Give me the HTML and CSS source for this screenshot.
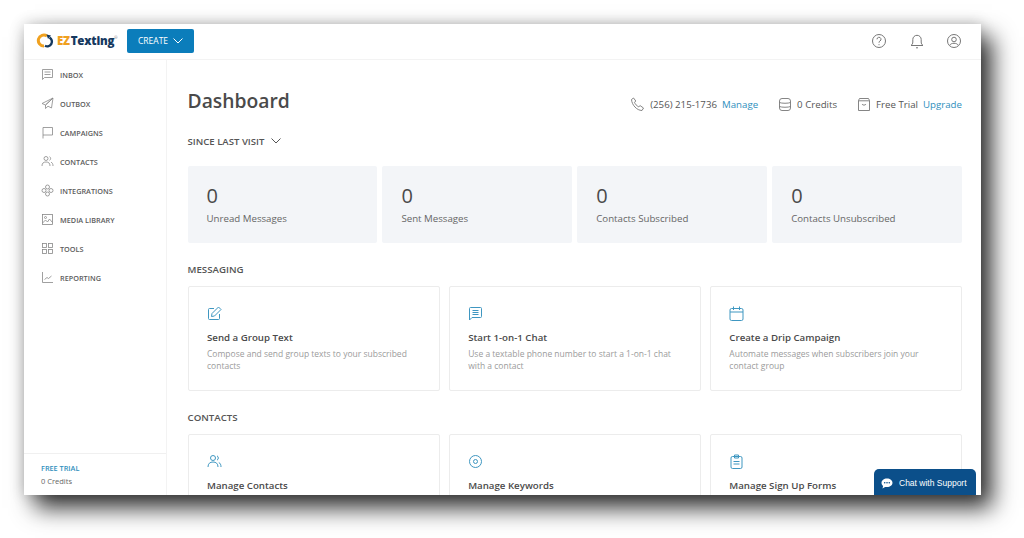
FILE: index.html
```html
<!DOCTYPE html>
<html lang="en">
<head>
    <meta charset="UTF-8">
    <meta name="viewport" content="width=device-width, initial-scale=1.0">
    <title>Dashboard</title>
    <link rel="stylesheet" href="styles.css">
</head>
<body>
    <div class="window">
        <header class="topbar">
            <div class="logo">
                <svg class="logo-mark" width="21" height="16" viewBox="0 0 21 16" fill="none">
                    <path d="M8 13a5.500 5.500 0 1 1 3-10" stroke="#f0a11f" stroke-width="3"/>
                    <path d="M9 12.800a4.600 4.600 0 1 0 4.500-8.200" stroke="#15395f" stroke-width="2.400"/>
                    <path d="M10.500 1.500l4.500 1-3 3.500z" fill="#15395f"/>
                </svg>
                <span class="logo-ez">EZ</span><span class="logo-texting">Texting</span><span class="logo-reg">®</span>
            </div>
            <button class="create-btn">CREATE
                <svg width="10" height="6" viewBox="0 0 10 6" fill="none" stroke="#fff" stroke-width="1"><path d="M.5.5 5 5l4.500-4.500"/></svg>
            </button>
            <div class="top-icons">
                <svg width="16" height="16" viewBox="0 0 16 16" fill="none" stroke="#777" stroke-width="1"><circle cx="8" cy="8" r="6.500"/><path d="M6 6.300a2 2 0 1 1 3 1.700c-.7.4-1 .8-1 1.700"/><path d="M8 11.200v1"/></svg>
                <svg width="16" height="16" viewBox="0 0 16 16" fill="none" stroke="#777" stroke-width="1"><path d="M2 12.500h12c-1.300-1-1.800-2-1.800-3.500V6.500a4.200 4.200 0 0 0-8.400 0V9c0 1.500-.5 2.500-1.800 3.500z"/><path d="M7 14.800h2"/></svg>
                <svg width="16" height="16" viewBox="0 0 16 16" fill="none" stroke="#777" stroke-width="1"><circle cx="8" cy="8" r="6.500"/><circle cx="8" cy="6.500" r="2.300"/><path d="M3.800 12.300c.8-1.500 2.200-2 4.200-2s3.400.5 4.200 2"/></svg>
            </div>
        </header>
        <div class="body-row">
            <nav class="sidebar">
                <ul class="nav-list">
                    <li class="nav-item">
                        <svg width="13" height="13" viewBox="0 0 13 13" fill="none" stroke="#888" stroke-width=".8"><path d="M1.500 1.500h10v8h-8l-2 2z"/><path d="M3.500 4h6M3.500 6.500h6"/></svg>
                        Inbox
                    </li>
                    <li class="nav-item">
                        <svg width="13" height="13" viewBox="0 0 13 13" fill="none" stroke="#888" stroke-width=".8"><path d="M12 1 1 6.500l3.500 1.500zM12 1 4.500 8v3.500L7 9.200M12 1l-1.500 10L7 9.200"/></svg>
                        Outbox
                    </li>
                    <li class="nav-item">
                        <svg width="13" height="13" viewBox="0 0 13 13" fill="none" stroke="#888" stroke-width=".8"><path d="M2 12.500V1.500h9.500v7.500H2"/></svg>
                        Campaigns
                    </li>
                    <li class="nav-item">
                        <svg width="13" height="13" viewBox="0 0 13 13" fill="none" stroke="#888" stroke-width=".8"><circle cx="5" cy="3.500" r="2"/><path d="M1 11c0-3 1.500-4 4-4s4 1 4 4M8.500 1.700a2 2 0 0 1 0 3.600M10 7.200c1.400.5 2 1.800 2 3.800"/></svg>
                        Contacts
                    </li>
                    <li class="nav-item">
                        <svg width="13" height="13" viewBox="0 0 13 13" fill="none" stroke="#888" stroke-width=".8"><circle cx="6.500" cy="3" r="2"/><circle cx="6.500" cy="10" r="2"/><circle cx="3" cy="6.500" r="2"/><circle cx="10" cy="6.500" r="2"/></svg>
                        Integrations
                    </li>
                    <li class="nav-item">
                        <svg width="13" height="13" viewBox="0 0 13 13" fill="none" stroke="#888" stroke-width=".8"><rect x="1.500" y="1.500" width="10" height="10"/><circle cx="4.500" cy="4.500" r="1"/><path d="m1.500 10 3-3 2 2 2-3 3 3.500"/></svg>
                        Media Library
                    </li>
                    <li class="nav-item">
                        <svg width="13" height="13" viewBox="0 0 13 13" fill="none" stroke="#888" stroke-width=".8"><rect x="1.500" y="1.500" width="4" height="4"/><rect x="7.500" y="1.500" width="4" height="4"/><rect x="1.500" y="7.500" width="4" height="4"/><rect x="7.500" y="7.500" width="4" height="4"/></svg>
                        Tools
                    </li>
                    <li class="nav-item">
                        <svg width="13" height="13" viewBox="0 0 13 13" fill="none" stroke="#888" stroke-width=".8"><path d="M1.500 1v10.500H12"/><path d="m3.500 8.500 2.500-2 1.500 1 3-2.500"/></svg>
                        Reporting
                    </li>
                </ul>
                <div class="plan">
                    <div class="plan-name">FREE TRIAL</div>
                    <div class="plan-credits">0 Credits</div>
                </div>
            </nav>
            <main class="content">
                <div class="title-row">
                    <h1>Dashboard</h1>
                    <div class="account">
                        <span class="account-item">
                            <svg width="15" height="15" viewBox="0 0 15 15" fill="none" stroke="#777" stroke-width=".9"><path d="M1.500 2.500 3.500 1l2.300 3-1.300 1.300c.5 1.700 2.300 3.700 4.300 4.500l1.300-1.200 3.400 2.400-1.500 2.500C7 13.500 1.800 8 1.500 2.500z"/></svg>
                            (256) 215-1736 <a class="link">Manage</a>
                        </span>
                        <span class="account-item">
                            <svg width="14" height="15" viewBox="0 0 14 15" fill="none" stroke="#777" stroke-width=".9"><rect x="1.500" y="1.500" width="11" height="12" rx="2.500"/><path d="M1.500 5.500c2 1 9 1 11 0M1.500 9.500c2 1 9 1 11 0"/></svg>
                            0 Credits
                        </span>
                        <span class="account-item">
                            <svg width="14" height="15" viewBox="0 0 14 15" fill="none" stroke="#777" stroke-width=".9"><path d="M2.500 1.500h9l1 2v10h-11v-10zM1.500 3.800h11"/><path d="M5 7c.5 1.500 3.500 1.500 4 0"/></svg>
                            Free Trial <a class="link">Upgrade</a>
                        </span>
                    </div>
                </div>
                <div class="since">SINCE LAST VISIT
                    <svg width="10" height="6" viewBox="0 0 10 6" fill="none" stroke="#555" stroke-width="1"><path d="M.5.5 5 5l4.500-4.500"/></svg>
                </div>
                <div class="stats">
                    <div class="stat"><div class="stat-num">0</div><div class="stat-label">Unread Messages</div></div>
                    <div class="stat"><div class="stat-num">0</div><div class="stat-label">Sent Messages</div></div>
                    <div class="stat"><div class="stat-num">0</div><div class="stat-label">Contacts Subscribed</div></div>
                    <div class="stat"><div class="stat-num">0</div><div class="stat-label">Contacts Unsubscribed</div></div>
                </div>
                <h2 class="section">MESSAGING</h2>
                <div class="cards">
                    <div class="card">
                        <svg class="card-icon" width="15" height="15" viewBox="0 0 15 15" fill="none" stroke="#3f97c1" stroke-width="1"><path d="M7 2.500H2.500a1 1 0 0 0-1 1v9a1 1 0 0 0 1 1h9a1 1 0 0 0 1-1V8"/><path d="M11.500 1 14 3.500 7.500 10l-3 .5.500-3z"/></svg>
                        <h3>Send a Group Text</h3>
                        <p>Compose and send group texts to your subscribed contacts</p>
                    </div>
                    <div class="card">
                        <svg class="card-icon" width="15" height="15" viewBox="0 0 15 15" fill="none" stroke="#3f97c1" stroke-width="1"><path d="M2.500 1.500h10a1 1 0 0 1 1 1v8a1 1 0 0 1-1 1H4l-2.500 2.500v-11.500a1 1 0 0 1 1-1z"/><path d="M4.500 4.500h6M4.500 6.500h6M4.500 8.500h6"/></svg>
                        <h3>Start 1-on-1 Chat</h3>
                        <p>Use a textable phone number to start a 1-on-1 chat with a contact</p>
                    </div>
                    <div class="card">
                        <svg class="card-icon" width="15" height="15" viewBox="0 0 15 15" fill="none" stroke="#3f97c1" stroke-width="1"><rect x="1" y="2.500" width="13" height="12" rx="1.500"/><path d="M1 6h13M4.500.5v3.500M10.500.5v3.500"/></svg>
                        <h3>Create a Drip Campaign</h3>
                        <p>Automate messages when subscribers join your contact group</p>
                    </div>
                </div>
                <h2 class="section">CONTACTS</h2>
                <div class="cards">
                    <div class="card">
                        <svg class="card-icon" width="15" height="15" viewBox="0 0 15 15" fill="none" stroke="#3f97c1" stroke-width="1"><circle cx="6" cy="4" r="2.500"/><path d="M1 13c0-3.500 2-5 5-5s5 1.500 5 5M10 1.800a2.500 2.500 0 0 1 0 4.400M11.800 8.500c1.500.7 2.200 2.300 2.200 4.500"/></svg>
                        <h3>Manage Contacts</h3>
                    </div>
                    <div class="card">
                        <svg class="card-icon" width="15" height="15" viewBox="0 0 15 15" fill="none" stroke="#3f97c1" stroke-width="1"><circle cx="7.500" cy="7.500" r="6"/><circle cx="7.500" cy="7.500" r="2"/></svg>
                        <h3>Manage Keywords</h3>
                    </div>
                    <div class="card">
                        <svg class="card-icon" width="15" height="15" viewBox="0 0 15 15" fill="none" stroke="#3f97c1" stroke-width="1"><rect x="2" y="2.500" width="11" height="12" rx="1.500"/><path d="M5.500 1h4v3h-4zM4.500 7.500h6M4.500 10h6"/></svg>
                        <h3>Manage Sign Up Forms</h3>
                    </div>
                </div>
            </main>
        </div>
        <div class="chat-btn">
            <svg width="12" height="11" viewBox="0 0 12 11"><path d="M6 .5c3.100 0 5.500 1.900 5.500 4.300S9.100 9.100 6 9.100c-.7 0-1.300-.1-1.900-.2L1.500 10.500l.6-2.500C1 7.100.5 6 .5 4.800.5 2.400 2.900.5 6 .5z" fill="#fff"/><circle cx="3.700" cy="4.800" r=".8" fill="#0b4f8a"/><circle cx="6" cy="4.800" r=".8" fill="#0b4f8a"/><circle cx="8.300" cy="4.800" r=".8" fill="#0b4f8a"/></svg>
            Chat with Support
        </div>
    </div>
</body>
</html>
```

FILE: styles.css
```css
html, body {
    height: 100%;
}
body {
    background-color: #ffffff;
    color: #4a4a4a;
    font-family: "Open Sans", sans-serif;
    margin: 0;
    padding: 0;
    overflow: hidden;
}
.window {
    position: relative;
    display: flex;
    flex-direction: column;
    width: 957px;
    height: 471px;
    margin: 24px 0 0 24px;
    background-color: #ffffff;
    box-shadow: 11px 13px 22px rgba(0, 0, 0, 0.8), 0 0 14px rgba(0, 0, 0, 0.2);
}
.topbar {
    display: flex;
    align-items: center;
    flex: 0 0 36px;
    box-sizing: border-box;
    border-bottom: 1px solid #f3f3f3;
    padding: 0 19px 2px 12px;
}
.logo {
    display: flex;
    align-items: center;
    width: 91px;
}
.logo-ez {
    color: #f0a11f;
    font-size: 11.5px;
    font-weight: 800;
    letter-spacing: -0.3px;
}
.logo-texting {
    color: #15395f;
    font-size: 11.5px;
    font-weight: 800;
    letter-spacing: -0.2px;
    margin-left: 1px;
}
.logo-reg {
    color: #777777;
    font-size: 4px;
    align-self: flex-start;
    margin-top: 2px;
}
.create-btn {
    display: flex;
    align-items: center;
    gap: 5px;
    height: 24px;
    width: 67px;
    justify-content: center;
    background-color: #0b7dbb;
    color: #ffffff;
    border: 0;
    border-radius: 2px;
    font-family: "Open Sans", sans-serif;
    font-size: 8.5px;
    font-weight: 400;
    padding: 0;
}
.top-icons {
    display: flex;
    gap: 21.5px;
    margin-left: auto;
}
.body-row {
    display: flex;
    flex: 1;
    min-height: 0;
}
.sidebar {
    display: flex;
    flex-direction: column;
    flex: 0 0 143px;
    box-sizing: border-box;
    border-right: 1px solid #f3f3f3;
}
.nav-list {
    list-style: none;
    margin: 0;
    padding: 0;
    flex: 1;
}
.nav-item {
    display: flex;
    align-items: center;
    gap: 6px;
    height: 29px;
    padding-left: 17px;
    color: #5c5c5c;
    font-size: 7.3px;
    font-weight: 600;
    text-transform: uppercase;
}
.plan {
    height: 42px;
    box-sizing: border-box;
    border-top: 1px solid #f0f0f0;
    padding: 9px 0 0 17px;
}
.plan-name {
    color: #2f8fbd;
    font-size: 7.3px;
    font-weight: 600;
    line-height: 10px;
}
.plan-credits {
    color: #666666;
    font-size: 7.5px;
    line-height: 10px;
    margin-top: 3px;
}
.content {
    flex: 1;
    min-width: 0;
    box-sizing: border-box;
    padding: 0 19px 0 20.5px;
    overflow: hidden;
}
.title-row {
    display: flex;
    justify-content: space-between;
    align-items: center;
    margin-top: 25px;
    height: 30px;
}
h1 {
    margin: 0;
    color: #4a4a4a;
    font-size: 19.3px;
    font-weight: 600;
}
.account {
    display: flex;
    gap: 20px;
    font-size: 9.7px;
    color: #555555;
    padding-top: 8px;
}
.account-item {
    display: flex;
    align-items: center;
    gap: 4px;
}
.account-item svg {
    margin-right: 1px;
}
.link {
    color: #2f8fbd;
    margin-left: 1px;
}
.since {
    display: flex;
    align-items: center;
    gap: 7px;
    margin-top: 19px;
    height: 14px;
    font-size: 9.6px;
    font-weight: 600;
    color: #555555;
}
.stats {
    display: grid;
    grid-template-columns: repeat(4, 1fr);
    gap: 5px;
    margin-top: 18px;
}
.stat {
    height: 77px;
    box-sizing: border-box;
    background-color: #f3f5f8;
    border-radius: 2px;
    padding: 18px 0 0 19px;
}
.stat-num {
    font-size: 20px;
    line-height: 24px;
    font-weight: 500;
    color: #4a4a4a;
}
.stat-label {
    font-size: 9.7px;
    line-height: 14px;
    margin-top: 4px;
    color: #666666;
}
.section {
    margin: 20px 0 0 0;
    height: 14px;
    font-size: 9.7px;
    line-height: 14px;
    font-weight: 600;
    color: #555555;
}
.cards {
    display: grid;
    grid-template-columns: repeat(3, 1fr);
    gap: 9px;
    margin-top: 9px;
}
.card {
    height: 105px;
    box-sizing: border-box;
    border: 1px solid #ececec;
    border-radius: 2px;
    padding: 19px 19px 0 18.5px;
}
.card-icon {
    display: block;
}
.card h3 {
    margin: 10px 0 0 0;
    font-size: 9.7px;
    line-height: 14px;
    font-weight: 600;
    color: #4a4a4a;
}
.card p {
    margin: 3px 0 0 0;
    font-size: 8.5px;
    line-height: 12px;
    color: #9b9b9b;
}
.chat-btn {
    position: absolute;
    right: 5px;
    bottom: 0;
    display: flex;
    align-items: center;
    gap: 6px;
    box-sizing: border-box;
    width: 102px;
    height: 26px;
    padding: 2px 0 0 7px;
    background-color: #0b4f8a;
    color: #ffffff;
    border-radius: 5px 5px 0 0;
    font-family: "Liberation Sans", sans-serif;
    font-size: 8.5px;
    white-space: nowrap;
}
```
